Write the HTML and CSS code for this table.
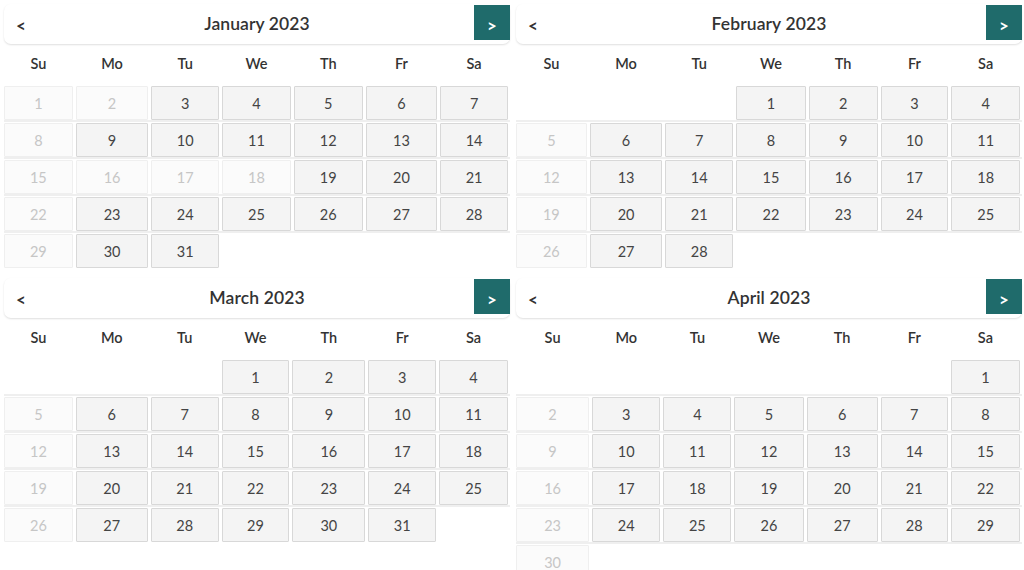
FILE: index.html
```html
<!DOCTYPE html>
<html lang="en">
<head>
<meta charset="utf-8">
<title>Calendars 2023</title>
<link rel="stylesheet" href="styles.css">
</head>
<body>
<div class="page">

  <section class="cal cal-jan">
    <header class="cal-head">
      <button class="nav prev">&lt;</button>
      <h2 class="title">January 2023</h2>
      <button class="nav next">&gt;</button>
    </header>
    <div class="row dows"><span>Su</span><span>Mo</span><span>Tu</span><span>We</span><span>Th</span><span>Fr</span><span>Sa</span></div>
    <div class="weeks">
      <div class="row week"><span class="d off">1</span><span class="d off">2</span><span class="d">3</span><span class="d">4</span><span class="d">5</span><span class="d">6</span><span class="d">7</span></div>
      <div class="row week"><span class="d off">8</span><span class="d">9</span><span class="d">10</span><span class="d">11</span><span class="d">12</span><span class="d">13</span><span class="d">14</span></div>
      <div class="row week"><span class="d off">15</span><span class="d off">16</span><span class="d off">17</span><span class="d off">18</span><span class="d">19</span><span class="d">20</span><span class="d">21</span></div>
      <div class="row week"><span class="d off">22</span><span class="d">23</span><span class="d">24</span><span class="d">25</span><span class="d">26</span><span class="d">27</span><span class="d">28</span></div>
      <div class="row week last"><span class="d off">29</span><span class="d">30</span><span class="d">31</span><span></span><span></span><span></span><span></span></div>
    </div>
  </section>

  <section class="cal cal-feb">
    <header class="cal-head">
      <button class="nav prev">&lt;</button>
      <h2 class="title">February 2023</h2>
      <button class="nav next">&gt;</button>
    </header>
    <div class="row dows"><span>Su</span><span>Mo</span><span>Tu</span><span>We</span><span>Th</span><span>Fr</span><span>Sa</span></div>
    <div class="weeks">
      <div class="row week"><span></span><span></span><span></span><span class="d">1</span><span class="d">2</span><span class="d">3</span><span class="d">4</span></div>
      <div class="row week"><span class="d off">5</span><span class="d">6</span><span class="d">7</span><span class="d">8</span><span class="d">9</span><span class="d">10</span><span class="d">11</span></div>
      <div class="row week"><span class="d off">12</span><span class="d">13</span><span class="d">14</span><span class="d">15</span><span class="d">16</span><span class="d">17</span><span class="d">18</span></div>
      <div class="row week"><span class="d off">19</span><span class="d">20</span><span class="d">21</span><span class="d">22</span><span class="d">23</span><span class="d">24</span><span class="d">25</span></div>
      <div class="row week last"><span class="d off">26</span><span class="d">27</span><span class="d">28</span><span></span><span></span><span></span><span></span></div>
    </div>
  </section>

  <section class="cal cal-mar">
    <header class="cal-head">
      <button class="nav prev">&lt;</button>
      <h2 class="title">March 2023</h2>
      <button class="nav next">&gt;</button>
    </header>
    <div class="row dows"><span>Su</span><span>Mo</span><span>Tu</span><span>We</span><span>Th</span><span>Fr</span><span>Sa</span></div>
    <div class="weeks">
      <div class="row week"><span></span><span></span><span></span><span class="d">1</span><span class="d">2</span><span class="d">3</span><span class="d">4</span></div>
      <div class="row week"><span class="d off">5</span><span class="d">6</span><span class="d">7</span><span class="d">8</span><span class="d">9</span><span class="d">10</span><span class="d">11</span></div>
      <div class="row week"><span class="d off">12</span><span class="d">13</span><span class="d">14</span><span class="d">15</span><span class="d">16</span><span class="d">17</span><span class="d">18</span></div>
      <div class="row week"><span class="d off">19</span><span class="d">20</span><span class="d">21</span><span class="d">22</span><span class="d">23</span><span class="d">24</span><span class="d">25</span></div>
      <div class="row week last"><span class="d off">26</span><span class="d">27</span><span class="d">28</span><span class="d">29</span><span class="d">30</span><span class="d">31</span><span></span></div>
    </div>
  </section>

  <section class="cal cal-apr">
    <header class="cal-head">
      <button class="nav prev">&lt;</button>
      <h2 class="title">April 2023</h2>
      <button class="nav next">&gt;</button>
    </header>
    <div class="row dows"><span>Su</span><span>Mo</span><span>Tu</span><span>We</span><span>Th</span><span>Fr</span><span>Sa</span></div>
    <div class="weeks">
      <div class="row week"><span></span><span></span><span></span><span></span><span></span><span></span><span class="d">1</span></div>
      <div class="row week"><span class="d off">2</span><span class="d">3</span><span class="d">4</span><span class="d">5</span><span class="d">6</span><span class="d">7</span><span class="d">8</span></div>
      <div class="row week"><span class="d off">9</span><span class="d">10</span><span class="d">11</span><span class="d">12</span><span class="d">13</span><span class="d">14</span><span class="d">15</span></div>
      <div class="row week"><span class="d off">16</span><span class="d">17</span><span class="d">18</span><span class="d">19</span><span class="d">20</span><span class="d">21</span><span class="d">22</span></div>
      <div class="row week"><span class="d off">23</span><span class="d">24</span><span class="d">25</span><span class="d">26</span><span class="d">27</span><span class="d">28</span><span class="d">29</span></div>
      <div class="row week last"><span class="d off">30</span><span></span><span></span><span></span><span></span><span></span><span></span></div>
    </div>
  </section>

</div>
</body>
</html>
```

FILE: styles.css
```css
* { box-sizing: border-box; }

html, body {
  margin: 0;
  padding: 0;
  background: #ffffff;
  overflow: hidden;
  height: 570px;
}

body {
  font-family: Lato, "Open Sans", "Liberation Sans", sans-serif;
  color: #333333;
}

.page {
  display: grid;
  grid-template-columns: 506px 506px;
  column-gap: 6px;
  row-gap: 10px;
  padding: 4px 2px 0 4px;
  align-items: start;
}

.cal {
  display: flex;
  flex-direction: column;
}

.cal-head {
  display: grid;
  grid-template-columns: 1fr auto 1fr;
  align-items: start;
  height: 40px;
  border-radius: 7px;
  box-shadow: 0 1px 2px rgba(0, 0, 0, 0.13);
  background: #ffffff;
}

.title {
  margin: 0;
  font-size: 17.5px;
  font-weight: 600;
  color: #333333;
  line-height: 40px;
  letter-spacing: 0.1px;
}

.nav {
  font-family: inherit;
  border: 0;
  background: transparent;
  font-size: 17px;
  font-weight: 700;
  cursor: pointer;
  padding: 0;
}

.prev {
  justify-self: start;
  color: #333333;
  height: 40px;
  padding-left: 12px;
  padding-top: 3px;
}

.next {
  justify-self: end;
  width: 36px;
  height: 35px;
  margin-top: 1px;
  background: #1f6b6b;
  color: #ffffff;
  padding-top: 6px;
}

.row {
  display: grid;
  column-gap: 3px;
}

.cal-jan .row { grid-template-columns: 70fr 74fr 69fr 70fr 70fr 73fr 69fr; }
.cal-feb .row { grid-template-columns: 71fr 73fr 68fr 70fr 69fr 68fr 69fr; }
.cal-mar .row { grid-template-columns: 69fr 72fr 68fr 68fr 73fr 68fr 69fr; }
.cal-apr .row { grid-template-columns: 73fr 68fr 68fr 69fr 71fr 67fr 69fr; }

.dows {
  height: 42px;
  padding-bottom: 4px;
  align-items: center;
  font-size: 14.5px;
  font-weight: 600;
  color: #333333;
  text-align: center;
  padding-right: 2px;
}

.week {
  padding-right: 2px;
}

.week + .week {
  border-top: 2px solid #efefef;
  padding-top: 1px;
}

.d {
  height: 34px;
  display: flex;
  align-items: center;
  justify-content: center;
  font-size: 14.5px;
  color: #444444;
  background: #f4f4f4;
  border: 1px solid #d8d8d8;
  border-radius: 1px;
}

.d.off {
  color: #c6c6c6;
  background: #fbfbfb;
  border-color: #efefef;
}
```
